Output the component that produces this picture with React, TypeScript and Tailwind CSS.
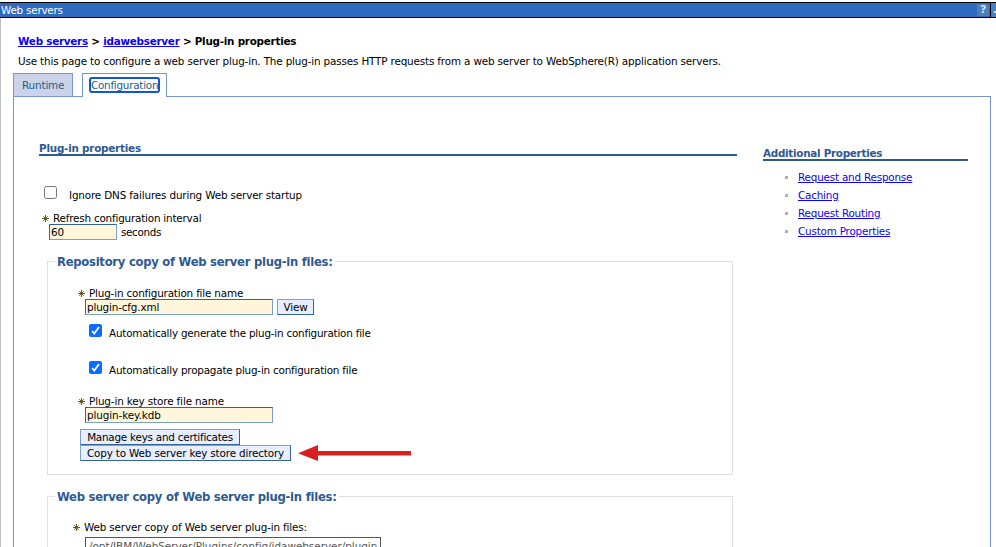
import type { ReactNode } from 'react';

function Star() {
  return (
    <svg className="h-[7px] w-[7px] shrink-0" viewBox="0 0 7 7" fill="none" stroke="#67591a">
      <path d="M3.5 0v7M0 3.5h7" strokeWidth="1.1" />
      <path d="M1.2 1.2l4.6 4.6M5.8 1.2l-4.6 4.6" strokeWidth="0.9" />
    </svg>
  );
}

function Check({ checked = false }: { checked?: boolean }) {
  return (
    <span
      className={
        checked
          ? 'h-[13px] w-[13px] shrink-0 rounded-[2px] bg-[#0b6cff]'
          : 'h-[13px] w-[13px] shrink-0 rounded-[2.5px] border border-[#767676] bg-white'
      }
    >
      {checked && (
        <svg viewBox="0 0 13 13" className="block h-[13px] w-[13px]" fill="none" stroke="#fff" strokeWidth="1.8">
          <path d="M3 7 5.3 9.5 10 3" />
        </svg>
      )}
    </span>
  );
}

function Field({ className, children }: { className: string; children: ReactNode }) {
  return (
    <div
      className={`h-4 shrink-0 border border-t-[#33639c] border-r-[#7aa0cc] border-b-[#7aa0cc] border-l-[#33639c] bg-[#fff6dc] pl-[1px] leading-[15px] ${className}`}
    >
      {children}
    </div>
  );
}

function Button({ className, children }: { className: string; children: ReactNode }) {
  return (
    <button
      className={`block h-4 shrink-0 border border-t-[#7aa0cc] border-r-[#33639c] border-b-[#33639c] border-l-[#7aa0cc] bg-[#e7eeff] text-center leading-[15px] ${className}`}
    >
      {children}
    </button>
  );
}

const links = ['Request and Response', 'Caching', 'Request Routing', 'Custom Properties'];

export default function App() {
  return (
    <div className="flex h-[547px] w-[996px] flex-col overflow-hidden bg-white pt-[2px] font-['DejaVu_Sans',sans-serif] text-[10.4px] tracking-[-0.155px] whitespace-nowrap text-black">
      <header className="flex h-4 shrink-0 items-center border-y border-black bg-[#2e6abf] leading-[14px] text-white">
        <span className="flex-1 pl-px tracking-[-0.23px]">Web servers</span>
        <span className="h-[12px] w-[12px] bg-[#4b80bd] text-center text-[11px] leading-[12px] font-bold text-[#d4e4f5]">?</span>
        <span className="h-[14px] w-px bg-[#2e6abf]" />
        <span className="h-[14px] w-px bg-black" />
        <span className="flex h-[14px] w-[5px] items-end justify-end bg-[#4b80bd] pb-1">
          <span className="h-[2px] w-[2px] bg-[#d4e4f5]" />
        </span>
      </header>
      <main className="flex min-h-0 flex-1 flex-col border-l border-[#c0c0c0] pr-[5px] pl-3">
        <nav className="mt-4 ml-[5px] h-[15px] shrink-0 leading-[15px] font-bold tracking-[-0.25px]">
          <a className="text-[#0d00f5] underline">Web servers</a> &gt; <a className="text-[#0d00f5] underline">idawebserver</a> &gt; Plug-in properties
        </nav>
        <p className="mt-[5px] ml-[5px] h-[15px] shrink-0 leading-[15px]">
          Use this page to configure a web server plug-in. The plug-in passes HTTP requests from a web server to WebSphere(R) application servers.
        </p>
        <div className="mt-1 flex h-6 shrink-0 text-[#215d8d]">
          <div className="w-[60px] border border-[#7696cf] bg-[#cbd3e8] pl-2 leading-[23px]">Runtime</div>
          <div className="w-[9px] border-b border-[#7696cf]" />
          <div className="w-[85px] border border-b-0 border-[#7696cf] bg-white pt-[3px] pl-[6px]">
            <div className="h-4 w-[71px] rounded-[3px] border-2 border-[#1359c4] leading-[13px] tracking-[-0.25px]">Configuration</div>
          </div>
          <div className="flex-1 border-b border-[#7696cf]" />
        </div>
        <div className="flex min-h-0 flex-1 border-x border-[#7696cf]">
          <section className="ml-[25px] w-[698px]">
            <h2 className="mt-[44px] h-[15px] border-b-2 border-[#2d5a92] leading-[15px] font-bold tracking-[-0.23px] text-[#2d5a92]">Plug-in properties</h2>
            <div className="mt-[30px] flex h-[17px] pl-[5px]">
              <Check />
              <span className="mt-[2px] ml-3 h-[15px] leading-[15px]">Ignore DNS failures during Web server startup</span>
            </div>
            <div className="mt-[9px] flex h-[13px] items-center pl-[3px] leading-[13px]">
              <Star /><span className="ml-1 tracking-[-0.2px]">Refresh configuration interval</span>
            </div>
            <div className="-mt-px flex h-4 pl-[10px]">
              <Field className="w-[68px]">60</Field>
              <span className="ml-1 leading-4 tracking-[-0.35px]">seconds</span>
            </div>
            <div className="ml-2 w-[686px]">
              <div className="mt-[14px] flex h-4 items-start">
                <div className="mt-[7px] h-[9px] w-2 border-t border-l border-[#e0e0e0]" />
                <h3 className="w-[280px] pl-[2px] text-[11.6px] leading-4 font-bold tracking-[-0.26px] text-[#2d5a92]">Repository copy of Web server plug-in files:</h3>
                <div className="mt-[7px] h-[9px] flex-1 border-t border-r border-[#e0e0e0]" />
              </div>
              <div className="h-[205px] border-x border-b border-[#e0e0e0] pt-[17px] pl-[30px]">
                <div className="flex h-[13px] items-center leading-[13px]"><Star /><span className="ml-1 tracking-[-0.18px]">Plug-in configuration file name</span></div>
                <div className="-mt-px flex gap-1 pl-[7px]">
                  <Field className="w-[188px]">plugin-cfg.xml</Field>
                  <Button className="w-[37px]">View</Button>
                </div>
                <div className="mt-[9px] flex h-[17px] pl-[11px]">
                  <Check checked /><span className="mt-[2px] ml-[7px] h-[15px] leading-[15px] tracking-[-0.21px]">Automatically generate the plug-in configuration file</span>
                </div>
                <div className="mt-5 flex h-[17px] pl-[11px]">
                  <Check checked /><span className="mt-[2px] ml-[7px] h-[15px] leading-[15px] tracking-[-0.21px]">Automatically propagate plug-in configuration file</span>
                </div>
                <div className="mt-[17px] flex h-[13px] items-center leading-[13px]"><Star /><span className="ml-1 tracking-[-0.13px]">Plug-in key store file name</span></div>
                <div className="-mt-px pl-[7px]"><Field className="w-[188px] tracking-[-0.1px]">plugin-key.kdb</Field></div>
                <div className="mt-[6px] pl-[2px]">
                  <Button className="w-[160px] tracking-[-0.23px]">Manage keys and certificates</Button>
                  <div className="flex">
                    <Button className="w-[211px]">Copy to Web server key store directory</Button>
                    <svg className="ml-[7px] h-4 w-[113px]" viewBox="0 0 113 16" fill="#d8201f">
                      <path d="M0 8.3 20 0V6H113V10.5H20V16Z" />
                    </svg>
                  </div>
                </div>
              </div>
              <div className="mt-[14px] flex h-4 items-start">
                <div className="mt-[7px] h-[9px] w-2 border-t border-l border-[#e0e0e0]" />
                <h3 className="w-[284px] pl-[2px] text-[11.6px] leading-4 font-bold tracking-[-0.25px] text-[#2d5a92]">Web server copy of Web server plug-in files:</h3>
                <div className="mt-[7px] h-[9px] flex-1 border-t border-r border-[#e0e0e0]" />
              </div>
              <div className="h-[60px] border-x border-[#e0e0e0] pt-[16px] pl-[25px]">
                <div className="flex h-[13px] items-center leading-[13px]"><Star /><span className="ml-1">Web server copy of Web server plug-in files:</span></div>
                <div className="mt-[3px] ml-3 h-10 w-[296px] border border-[#555] pl-[3px] leading-[16px] tracking-[-0.01px] text-[#555]">/opt/IBM/WebServer/Plugins/config/idawebserver/plugin-</div>
              </div>
            </div>
          </section>
          <aside className="ml-[26px] w-[205px]">
            <h2 className="mt-[49px] h-[15px] border-b-2 border-[#2d5a92] leading-[15px] font-bold tracking-[-0.28px] text-[#2d5a92]">Additional Properties</h2>
            <ul className="mt-[7px] pl-[22px]">
              {links.map((link) => (
                <li key={link} className="flex h-[18px] items-center leading-[18px]">
                  <span className="mt-px h-[3px] w-[3px] bg-[#b0b0b0]" />
                  <a className="ml-[10px] tracking-[-0.2px] text-[#0d00f5] underline">{link}</a>
                </li>
              ))}
            </ul>
          </aside>
        </div>
      </main>
    </div>
  );
}
